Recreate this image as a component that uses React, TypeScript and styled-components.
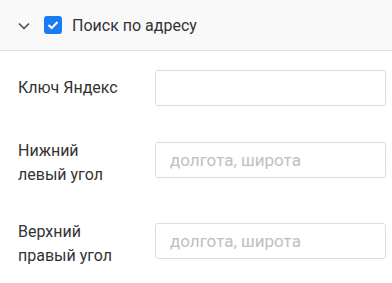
import React from "react";
import styled, { createGlobalStyle } from "styled-components";

const GlobalStyle = createGlobalStyle`
  body {
    margin: 0;
    background: #ffffff;
    font-family: Roboto, "Noto Sans", sans-serif;
    color: #333333;
  }
`;

const Panel = styled.div`
  width: 392px;
`;
const Header = styled.div`
  display: flex;
  align-items: center;
  height: 50px;
  padding-left: 18px;
  background: #f9f9f9;
  border-bottom: 1px solid #e0e0e0;
`;
const Chevron = styled.svg`
  width: 12px;
  height: 8px;
  margin-right: 14px;
  margin-top: 1px;
`;
const CheckBox = styled.div`
  display: flex;
  align-items: center;
  justify-content: center;
  width: 18px;
  height: 18px;
  border-radius: 3px;
  background: #1a7cf2;
  margin-right: 10px;
`;
const Title = styled.span`
  font-size: 16px;
`;
const Body = styled.div`
  display: flex;
  flex-direction: column;
  gap: 27px;
  padding: 19px 6px 20px 18px;
`;
const Row = styled.div`
  display: flex;
  align-items: center;
`;
const Label = styled.div<{ $multi?: boolean }>`
  width: 137px;
  flex-shrink: 0;
  font-size: 16px;
  line-height: 24px;
  padding-top: ${(p) => (p.$multi ? 6 : 0)}px;
`;
const Input = styled.input`
  flex: 1;
  min-width: 0;
  height: 36px;
  box-sizing: border-box;
  border: 1px solid #dcdcdc;
  border-radius: 3px;
  padding: 0 14px;
  font-family: inherit;
  font-size: 17px;
  color: #333333;
  outline: none;
  &::placeholder {
    color: #c0c0c0;
  }
`;

const fields = [
  { label: ["Ключ Яндекс"], placeholder: "" },
  { label: ["Нижний", "левый угол"], placeholder: "долгота, широта" },
  { label: ["Верхний", "правый угол"], placeholder: "долгота, широта" },
];

export default function App() {
  return (
    <Panel>
      <GlobalStyle />
      <Header>
        <Chevron viewBox="0 0 12 8">
          <path d="M1 1.5 L6 6.5 L11 1.5" fill="none" stroke="#444" strokeWidth="1.5" />
        </Chevron>
        <CheckBox>
          <svg width="12" height="10" viewBox="0 0 12 10">
            <path d="M1.5 5 L4.7 8 L10.5 2" fill="none" stroke="#fff" strokeWidth="2" />
          </svg>
        </CheckBox>
        <Title>Поиск по адресу</Title>
      </Header>
      <Body>
        {fields.map((f, i) => (
          <Row key={i}>
            <Label $multi={f.label.length > 1}>
              {f.label.map((l, j) => (
                <div key={j}>{l}</div>
              ))}
            </Label>
            <Input placeholder={f.placeholder} />
          </Row>
        ))}
      </Body>
    </Panel>
  );
}
